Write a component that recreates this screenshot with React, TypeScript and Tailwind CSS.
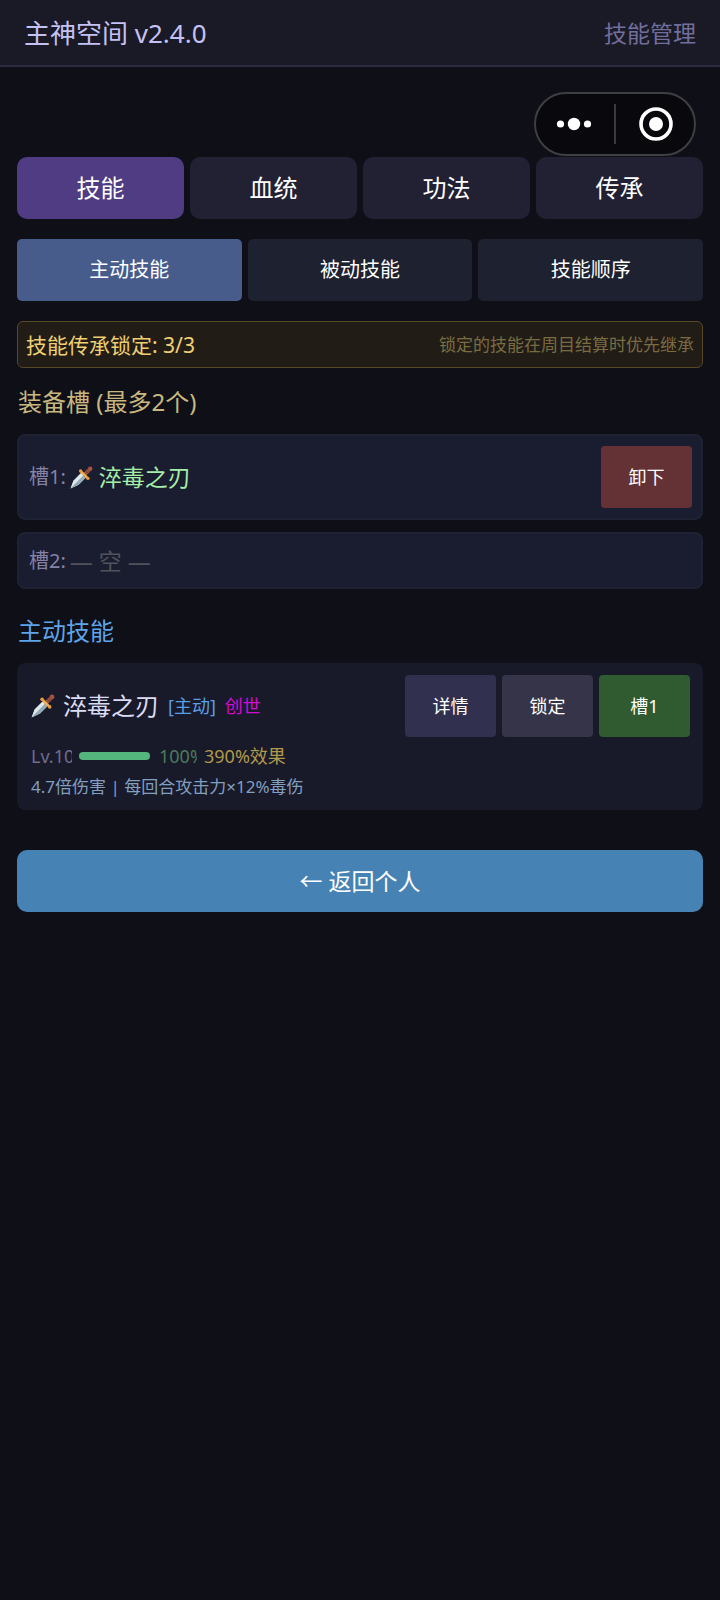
import type { ReactNode } from 'react';

function Dagger({ className }: { className: string }) {
  return (
    <svg viewBox="0 0 24 24" className={className} aria-hidden="true">
      <path d="M0.6 23.4 3.6 15.4 11.6 7.4 16.4 12.2 9 19.6Z" fill="#b9cbd3" />
      <path d="M0.6 23.4 3.6 15.4 11.6 7.4 14 9.8Z" fill="#dfe9ec" />
      <path d="M0.6 23.4 14 9.8 16.4 12.2 9 19.6Z" fill="#93a9b4" />
      <path d="M14.2 7 19 2.2 21.8 5 17 9.8Z" fill="#9a5340" />
      <path d="M16.2 5 19 7.8M18 3.2 20.8 6" stroke="#6e3529" strokeWidth="1" />
      <circle cx="21.1" cy="2.9" r="2.3" fill="#a6523c" />
      <path d="M11.4 5.6 18.4 12.6" stroke="#f0b04c" strokeWidth="2.4" strokeLinecap="round" />
      <circle cx="11.1" cy="5.3" r="1.8" fill="#e89a3c" />
      <circle cx="18.7" cy="12.9" r="1.8" fill="#e89a3c" />
    </svg>
  );
}

function Tab({ active, children }: { active?: boolean; children: ReactNode }) {
  return (
    <button
      type="button"
      className={`h-[62px] flex-1 rounded-[10px] text-[24px] text-white ${active ? 'bg-[#503c82]' : 'bg-[#222133]'}`}
    >
      {children}
    </button>
  );
}

function SubTab({ active, children }: { active?: boolean; children: ReactNode }) {
  return (
    <button
      type="button"
      className={`h-[62px] flex-1 rounded-[5px] text-[20px] text-white ${active ? 'bg-[#485c8c]' : 'bg-[#1e2130]'}`}
    >
      {children}
    </button>
  );
}

function ActionButton({ color, children }: { color: string; children: ReactNode }) {
  return (
    <button type="button" className={`h-[62px] w-[91px] shrink-0 rounded-[4px] text-[18px] text-white ${color}`}>
      {children}
    </button>
  );
}

export default function App() {
  return (
    <div className="min-h-screen bg-[#0e0f17] font-['Noto_Sans','Noto_Sans_CJK_SC',sans-serif] font-normal">
      <header className="flex h-[67px] items-center justify-between border-b-2 border-[#29293f] bg-[#1a1a27] px-6">
        <h1 className="text-[26px] leading-8 text-[#c4c2f4]">主神空间 v2.4.0</h1>
        <span className="text-[23px] leading-8 text-[#716e9c]">技能管理</span>
      </header>

      <main className="px-[17px] pt-[25px]">
        <div className="mr-[7px] mb-px flex justify-end">
          <div className="flex h-16 w-[162px] items-center rounded-full border-2 border-[#3e3e43] bg-[#08080d]">
            <button type="button" aria-label="更多" className="flex h-full flex-1 items-center justify-center pr-[2px]">
              <svg viewBox="0 0 36 14" className="h-[14px] w-9" fill="#fff">
                <circle cx="4.5" cy="7" r="3.6" />
                <circle cx="18" cy="7" r="6.2" />
                <circle cx="31.5" cy="7" r="3.6" />
              </svg>
            </button>
            <span className="h-10 w-[2px] bg-[#3a3a40]" />
            <button type="button" aria-label="关闭" className="flex h-full flex-1 items-center justify-center pl-[2px]">
              <svg viewBox="0 0 34 34" className="size-[34px]">
                <circle cx="17" cy="17" r="15" fill="none" stroke="#fff" strokeWidth="3.6" />
                <circle cx="17" cy="17" r="7" fill="#fff" />
              </svg>
            </button>
          </div>
        </div>

        <nav className="flex gap-[6px]">
          <Tab active>技能</Tab>
          <Tab>血统</Tab>
          <Tab>功法</Tab>
          <Tab>传承</Tab>
        </nav>

        <nav className="mt-5 flex gap-[6px]">
          <SubTab active>主动技能</SubTab>
          <SubTab>被动技能</SubTab>
          <SubTab>技能顺序</SubTab>
        </nav>

        <div className="mt-5 flex h-[47px] items-center justify-between rounded-[6px] border border-[#584a28] bg-[#211d16] px-2">
          <span className="text-[21px] leading-7 text-[#f0cf72]">技能传承锁定: 3/3</span>
          <span className="text-[17px] leading-7 text-[#7a6c42]">锁定的技能在周目结算时优先继承</span>
        </div>

        <section>
          <h2 className="mt-[18px] pl-px text-[24px] leading-8 text-[#c8b880]">装备槽 (最多2个)</h2>
          <ul className="mt-4 flex flex-col gap-3">
            <li className="flex items-center justify-between rounded-[8px] border-2 border-[#1f2233] bg-[#1a1d2f] py-[10px] pr-[9px] pl-[10px]">
              <div className="flex items-center leading-8">
                <span className="text-[20px] text-[#8582a8]">槽1:</span>
                <Dagger className="ml-1 size-[23px]" />
                <span className="ml-[6px] text-[23px] text-[#a4eea8]">淬毒之刃</span>
              </div>
              <ActionButton color="bg-[#643234]">卸下</ActionButton>
            </li>
            <li className="flex h-[57px] items-center rounded-[8px] border-2 border-[#1f2233] bg-[#1a1d2f] pr-[9px] pl-[10px] leading-8">
              <span className="text-[20px] text-[#8582a8]">槽2:</span>
              <span className="ml-1 text-[23px] text-[#50525c]">— 空 —</span>
            </li>
          </ul>
        </section>

        <section>
          <h2 className="mt-[26px] pl-px text-[24px] leading-8 text-[#5fa4e8]">主动技能</h2>
          <article className="mt-4 rounded-[8px] bg-[#181a2a] pt-3 pr-[13px] pb-2 pl-[14px]">
            <div className="flex items-center justify-between">
              <div className="flex items-center leading-8">
                <Dagger className="size-6" />
                <h3 className="ml-2 text-[24px] text-[#dcdcf5]">淬毒之刃</h3>
                <span className="ml-[9px] text-[18px] text-[#5a9ee6]">[主动]</span>
                <span className="ml-[9px] text-[18px] text-[#d40ad4]">创世</span>
              </div>
              <div className="flex gap-[6px]">
                <ActionButton color="bg-[#32304f]">详情</ActionButton>
                <ActionButton color="bg-[#353448]">锁定</ActionButton>
                <ActionButton color="bg-[#305a30]">槽1</ActionButton>
              </div>
            </div>
            <div className="mt-1 flex h-[30px] items-center text-[18px] leading-[30px]">
              <span className="w-[41px] overflow-hidden whitespace-nowrap text-[#6f6d8f]">Lv.10</span>
              <span className="ml-[7px] h-2 w-[71px] rounded-full bg-[#54b67c]" />
              <span className="ml-[9px] w-[38px] overflow-hidden whitespace-nowrap text-[#4b7a5c]">100%</span>
              <span className="ml-[7px] text-[#b0984a]">390%效果</span>
            </div>
            <p className="text-[17px] leading-[31px] text-[#829fc0]">4.7倍伤害 | 每回合攻击力×12%毒伤</p>
          </article>
        </section>

        <button type="button" className="mt-10 h-[62px] w-full rounded-[10px] bg-[#4682b4] text-[23px] text-white">
          ← 返回个人
        </button>
      </main>
    </div>
  );
}
